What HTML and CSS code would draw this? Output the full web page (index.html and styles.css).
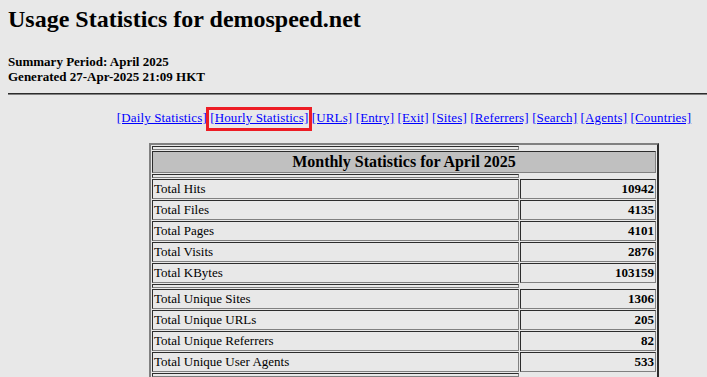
FILE: index.html
```html
<!DOCTYPE html>
<html>
<head>
<meta charset="utf-8">
<title>Usage Statistics for demospeed.net - April 2025</title>
<link rel="stylesheet" href="styles.css">
</head>
<body>
<div class="page">
  <h2 class="title">Usage Statistics for demospeed.net</h2>
  <p class="summary">Summary Period: April 2025<br>Generated 27-Apr-2025 21:09 HKT</p>
  <hr class="rule">
  <div class="nav">
    <a href="#DAYSTATS">[Daily Statistics]</a>
    <span class="marked"><a href="#HOURSTATS">[Hourly Statistics]</a></span>
    <a href="#TOPURLS">[URLs]</a>
    <a href="#TOPENTRY">[Entry]</a>
    <a href="#TOPEXIT">[Exit]</a>
    <a href="#TOPSITES">[Sites]</a>
    <a href="#TOPREFS">[Referrers]</a>
    <a href="#TOPSEARCH">[Search]</a>
    <a href="#TOPAGENTS">[Agents]</a>
    <a href="#TOPCTRYS">[Countries]</a>
  </div>
  <div class="center">
    <table class="stats">
      <tr><th class="sep"></th></tr>
      <tr><th class="head" colspan="2">Monthly Statistics for April 2025</th></tr>
      <tr><th class="sep"></th></tr>
      <tr><td class="label">Total Hits</td><td class="value">10942</td></tr>
      <tr><td class="label">Total Files</td><td class="value">4135</td></tr>
      <tr><td class="label">Total Pages</td><td class="value">4101</td></tr>
      <tr><td class="label">Total Visits</td><td class="value">2876</td></tr>
      <tr><td class="label">Total KBytes</td><td class="value">103159</td></tr>
      <tr><th class="sep"></th></tr>
      <tr><td class="label">Total Unique Sites</td><td class="value">1306</td></tr>
      <tr><td class="label">Total Unique URLs</td><td class="value">205</td></tr>
      <tr><td class="label">Total Unique Referrers</td><td class="value">82</td></tr>
      <tr><td class="label">Total Unique User Agents</td><td class="value">533</td></tr>
      <tr><th class="sep"></th></tr>
    </table>
  </div>
</div>
</body>
</html>
```

FILE: styles.css
```css
html {
  overflow: hidden;
  background: #e8e8e8;
}

body {
  margin: 0;
  background: #e8e8e8;
  color: #000;
  font-family: "Liberation Serif", "Times New Roman", serif;
}

.page {
  padding: 5px 0 0 8px;
}

.title {
  font-size: 24px;
  font-weight: bold;
  line-height: 28px;
  margin: 0 0 21px;
}

.summary {
  font-size: 13px;
  font-weight: bold;
  line-height: 15px;
  margin: 0;
}

.rule {
  margin: 9px 0 0;
  height: 0;
  border: 1px inset #808080;
  border-width: 1px 0;
}

.nav {
  margin-top: 15px;
  padding-left: 93px;
  font-size: 13px;
  line-height: 15px;
  letter-spacing: 0.13px;
  text-align: center;
}

.nav a {
  color: #0000ff;
  text-decoration: underline;
}

.marked {
  position: relative;
}

.marked::after {
  content: "";
  position: absolute;
  left: -4px;
  right: -4px;
  top: -3px;
  bottom: -6px;
  border: 3px solid #ed1c24;
}

.center {
  display: flex;
  justify-content: center;
  margin-top: 18px;
  padding-left: 93px;
}

.stats {
  width: 510px;
  border: 2px outset #808080;
  border-collapse: separate;
  border-spacing: 1px;
  font-size: 13px;
  line-height: 16px;
}

.stats th,
.stats td {
  border: 1px inset #808080;
  padding: 1px;
}

.stats .sep {
  height: 4px;
  box-sizing: border-box;
  padding: 0;
  line-height: 0;
  font-size: 0;
}

.stats .head {
  background: #c0c0c0;
  font-size: 16px;
  line-height: 18px;
  font-weight: bold;
  text-align: center;
}

.stats .label {
  width: 363px;
  text-align: left;
  font-weight: normal;
}

.stats .value {
  text-align: right;
  font-weight: bold;
}
```
